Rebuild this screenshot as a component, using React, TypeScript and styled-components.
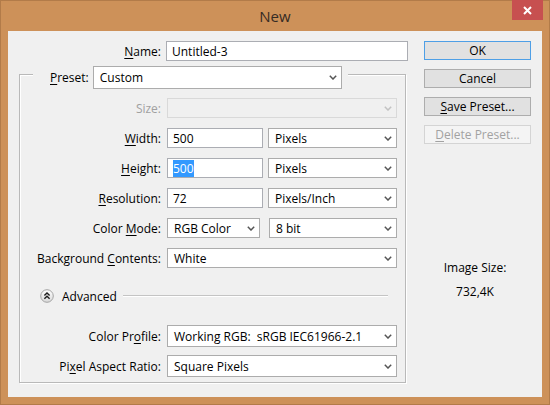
import styled, { createGlobalStyle } from "styled-components";

const GlobalStyle = createGlobalStyle`
	html, body {
		margin: 0;
		padding: 0;
		background: #cd9159;
	}
	* {
		box-sizing: border-box;
	}
`;

const Window = styled.div`
	width: 550px;
	height: 405px;
	display: flex;
	flex-direction: column;
	background: #cd9159;
	border: 1px solid #b27b49;
	font-family: "Open Sans", "Noto Sans", sans-serif;
	font-size: 12px;
	color: #000;
`;

const TitleBar = styled.div`
	height: 30px;
	display: grid;
	grid-template-columns: 1fr auto 1fr;
	align-items: center;
	& > .title {
		grid-column: 2;
		font-size: 15px;
		color: #352b24;
		margin-top: -1px;
	}
`;

const CloseButton = styled.div`
	grid-column: 3;
	justify-self: end;
	align-self: start;
	width: 31px;
	height: 20px;
	margin-top: -1px;
	margin-right: 6px;
	background: #c75050;
	display: flex;
	align-items: center;
	justify-content: center;
`;

const Client = styled.div`
	flex: 1;
	margin: 0 7px 7px 7px;
	background: #f0f0f0;
	display: flex;
`;

const FormColumn = styled.div`
	width: 398px;
	padding: 10px 0 0 11px;
	display: flex;
	flex-direction: column;
`;

const SideColumn = styled.div`
	width: 107px;
	margin-left: 18px;
	padding-top: 10px;
	display: flex;
	flex-direction: column;
	gap: 9px;
`;

const NameRow = styled.div`
	display: grid;
	grid-template-columns: 142px 242px;
	column-gap: 5px;
	align-items: center;
`;

const Label = styled.div<{ $disabled?: boolean }>`
	text-align: right;
	white-space: nowrap;
	color: ${(p) => (p.$disabled ? "#a0a0a0" : "#000")};
`;

const Key = styled.span`
	text-decoration: underline;
	text-underline-offset: 2px;
`;

const TextBox = styled.div<{ $w?: number; $h?: number }>`
	width: ${(p) => (p.$w ? `${p.$w}px` : "auto")};
	height: ${(p) => p.$h ?? 20}px;
	background: #fff;
	border: 1px solid #abadb3;
	padding-left: 5px;
	display: flex;
	align-items: center;
	white-space: nowrap;
`;

const Highlight = styled.span`
	background: #3399ff;
	color: #fff;
`;

const SelectBox = styled.div<{ $w?: number; $h?: number; $disabled?: boolean }>`
	width: ${(p) => (p.$w ? `${p.$w}px` : "auto")};
	flex: ${(p) => (p.$w ? "none" : "1")};
	height: ${(p) => p.$h ?? 20}px;
	background: ${(p) => (p.$disabled ? "#f0f0f0" : "#fff")};
	border: 1px solid ${(p) => (p.$disabled ? "#d9d9d9" : "#acacac")};
	padding: 0 4px 0 6px;
	display: flex;
	align-items: center;
	justify-content: space-between;
	white-space: pre;
`;

const GroupBox = styled.div`
	margin-top: 13px;
	width: 387px;
	border: 1px solid #b9b9b9;
	box-shadow: inset 1px 1px 0 #fff, 1px 1px 0 #fff;
	padding-bottom: 5px;
	display: flex;
	flex-direction: column;
`;

const GroupHeader = styled.div`
	align-self: flex-start;
	margin: -9px 0 0 13px;
	padding: 0 6px 0 17px;
	background: #f0f0f0;
	display: flex;
	align-items: center;
	gap: 4px;
`;

const Rows = styled.div<{ $top: number; $gap: number }>`
	margin-top: ${(p) => p.$top}px;
	display: flex;
	flex-direction: column;
	gap: ${(p) => p.$gap}px;
`;

const FieldRow = styled.div`
	display: grid;
	grid-template-columns: 141px 230px;
	column-gap: 6px;
	align-items: center;
`;

const Pair = styled.div<{ $gap: number }>`
	display: flex;
	gap: ${(p) => p.$gap}px;
`;

const AdvancedRow = styled.div`
	margin-top: 20px;
	height: 16px;
	display: flex;
	align-items: center;
	padding: 0 17px 0 20px;
	& > .text {
		margin-left: 8px;
	}
	& > .rule {
		flex: 1;
		margin-left: 6px;
		height: 2px;
		border-top: 1px solid #c4c4c4;
		border-bottom: 1px solid #fff;
	}
`;

const Button = styled.div<{ $default?: boolean; $disabled?: boolean }>`
	height: 19px;
	display: flex;
	align-items: center;
	justify-content: center;
	background: ${(p) => (p.$disabled ? "#f4f4f4" : "#e1e1e1")};
	border: 1px solid
		${(p) => (p.$default ? "#4e9fe6" : p.$disabled ? "#d4d4d4" : "#adadad")};
	color: ${(p) => (p.$disabled ? "#a2a2a2" : "#000")};
`;

const SizeInfo = styled.div`
	margin-top: 107px;
	display: flex;
	flex-direction: column;
	align-items: center;
	gap: 8px;
	padding-right: 5px;
	line-height: 16px;
`;

const Chevron = ({ disabled }: { disabled?: boolean }) => (
	<svg width="8" height="5" viewBox="0 0 8 5">
		<polyline
			points="0.8,0.8 4,4 7.2,0.8"
			fill="none"
			stroke={disabled ? "#c2c2c2" : "#555"}
			strokeWidth="1.5"
		/>
	</svg>
);

const Select = ({
	value,
	w,
	h,
	disabled,
}: {
	value?: string;
	w?: number;
	h?: number;
	disabled?: boolean;
}) => (
	<SelectBox $w={w} $h={h} $disabled={disabled}>
		<span>{value}</span>
		<Chevron disabled={disabled} />
	</SelectBox>
);

const AdvancedIcon = () => (
	<svg width="14" height="14" viewBox="0 0 14 14">
		<defs>
			<linearGradient id="adv" x1="0" y1="0" x2="0" y2="1">
				<stop offset="0" stopColor="#ffffff" />
				<stop offset="1" stopColor="#d8d8d8" />
			</linearGradient>
		</defs>
		<circle cx="7" cy="7" r="6.3" fill="url(#adv)" stroke="#a4a4a4" />
		<polyline points="4.4,6.6 7,4 9.6,6.6" fill="none" stroke="#1e1e1e" strokeWidth="1.4" />
		<polyline points="4.4,9.8 7,7.2 9.6,9.8" fill="none" stroke="#1e1e1e" strokeWidth="1.4" />
	</svg>
);

export default function App() {
	return (
		<>
			<GlobalStyle />
			<Window>
				<TitleBar>
					<span className="title">New</span>
					<CloseButton>
						<svg width="9" height="9" viewBox="0 0 9 9">
							<path d="M1 1 L8 8 M8 1 L1 8" stroke="#fff" strokeWidth="2" />
						</svg>
					</CloseButton>
				</TitleBar>
				<Client>
					<FormColumn>
						<NameRow>
							<Label>
								<Key>N</Key>ame:
							</Label>
							<TextBox>Untitled-3</TextBox>
						</NameRow>
						<GroupBox>
							<GroupHeader>
								<span>
									<Key>P</Key>reset:
								</span>
								<Select value="Custom" w={249} h={23} />
							</GroupHeader>
							<Rows $top={9} $gap={10}>
								<FieldRow>
									<Label $disabled>Size:</Label>
									<Select disabled />
								</FieldRow>
								<FieldRow>
									<Label>
										<Key>W</Key>idth:
									</Label>
									<Pair $gap={5}>
										<TextBox $w={96}>500</TextBox>
										<Select value="Pixels" />
									</Pair>
								</FieldRow>
								<FieldRow>
									<Label>
										<Key>H</Key>eight:
									</Label>
									<Pair $gap={5}>
										<TextBox $w={96}>
											<Highlight>500</Highlight>
										</TextBox>
										<Select value="Pixels" />
									</Pair>
								</FieldRow>
								<FieldRow>
									<Label>
										<Key>R</Key>esolution:
									</Label>
									<Pair $gap={5}>
										<TextBox $w={96}>72</TextBox>
										<Select value="Pixels/Inch" />
									</Pair>
								</FieldRow>
								<FieldRow>
									<Label>
										Color <Key>M</Key>ode:
									</Label>
									<Pair $gap={9}>
										<Select value="RGB Color" w={93} />
										<Select value="8 bit" />
									</Pair>
								</FieldRow>
								<FieldRow>
									<Label>
										Background <Key>C</Key>ontents:
									</Label>
									<Select value="White" />
								</FieldRow>
							</Rows>
							<AdvancedRow>
								<AdvancedIcon />
								<span className="text">Advanced</span>
								<div className="rule" />
							</AdvancedRow>
							<Rows $top={21} $gap={8}>
								<FieldRow>
									<Label>
										Color Pr<Key>o</Key>file:
									</Label>
									<Select value="Working RGB:  sRGB IEC61966-2.1" h={22} />
								</FieldRow>
								<FieldRow>
									<Label>
										Pi<Key>x</Key>el Aspect Ratio:
									</Label>
									<Select value="Square Pixels" h={22} />
								</FieldRow>
							</Rows>
						</GroupBox>
					</FormColumn>
					<SideColumn>
						<Button $default>OK</Button>
						<Button>Cancel</Button>
						<Button>
							<span>
								<Key>S</Key>ave Preset...
							</span>
						</Button>
						<Button $disabled>
							<span>
								<Key>D</Key>elete Preset...
							</span>
						</Button>
						<SizeInfo>
							<span>Image Size:</span>
							<span>732,4K</span>
						</SizeInfo>
					</SideColumn>
				</Client>
			</Window>
		</>
	);
}
